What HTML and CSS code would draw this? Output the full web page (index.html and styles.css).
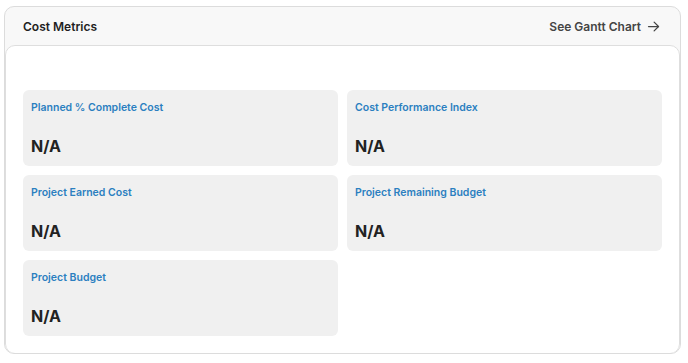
FILE: index.html
```html
<!DOCTYPE html>
<html lang="en">
  <head>
    <meta charset="UTF-8" />
    <title>Cost Metrics</title>
    <link rel="stylesheet" href="styles.css">
  </head>
  <body>
    <div class="metrics-card">
      <div class="metrics-header">
        <h3>Cost Metrics</h3>
        <a href="#" class="gantt-link">
          See Gantt Chart
          <svg width="15" height="15" viewBox="0 0 24 24" fill="none" stroke="currentColor" stroke-width="2" stroke-linecap="round" stroke-linejoin="round">
            <path d="M4 12h16" />
            <path d="M13 5l7 7-7 7" />
          </svg>
        </a>
      </div>
      <div class="metrics-body">
        <div class="metric">
          <div class="metric-label">Planned % Complete Cost</div>
          <div class="metric-value">N/A</div>
        </div>
        <div class="metric">
          <div class="metric-label">Cost Performance Index</div>
          <div class="metric-value">N/A</div>
        </div>
        <div class="metric">
          <div class="metric-label">Project Earned Cost</div>
          <div class="metric-value">N/A</div>
        </div>
        <div class="metric">
          <div class="metric-label">Project Remaining Budget</div>
          <div class="metric-value">N/A</div>
        </div>
        <div class="metric">
          <div class="metric-label">Project Budget</div>
          <div class="metric-value">N/A</div>
        </div>
      </div>
    </div>
  </body>
</html>
```
FILE: styles.css
```css
body {
  margin: 0;
  font-family: "Inter", "Liberation Sans", sans-serif;
  background-color: #ffffff;
}
.metrics-card {
  margin: 6px 0 0 4px;
  width: 677px;
  height: 348px;
  box-sizing: border-box;
  border: 1px solid #dcdcdc;
  border-radius: 10px;
  background-color: #f8f8f8;
  display: flex;
  flex-direction: column;
  overflow: hidden;
}
.metrics-header {
  height: 38px;
  flex-shrink: 0;
  display: flex;
  align-items: center;
  justify-content: space-between;
  padding: 0 19px 0 18px;
}
.metrics-header h3 {
  margin: 0;
  font-size: 12px;
  font-weight: 600;
  color: #1f1f1f;
}
.gantt-link {
  display: flex;
  align-items: center;
  gap: 5px;
  font-size: 12px;
  font-weight: 600;
  color: #454545;
  text-decoration: none;
}
.metrics-body {
  flex: 1;
  background-color: #ffffff;
  border: 1px solid #dedede;
  border-radius: 10px;
  padding: 44px 17px 17px 17px;
  display: grid;
  grid-template-columns: 1fr 1fr;
  grid-auto-rows: 76px;
  gap: 9px;
  align-content: start;
}
.metric {
  background-color: #f0f0f0;
  border-radius: 6px;
  padding: 11px 8px 10px 8px;
  display: flex;
  flex-direction: column;
  justify-content: space-between;
}
.metric-label {
  font-size: 10.5px;
  line-height: 14px;
  font-weight: 600;
  color: #2b7fc0;
}
.metric-value {
  font-size: 16px;
  line-height: 20px;
  font-weight: 700;
  color: #222222;
}
```
